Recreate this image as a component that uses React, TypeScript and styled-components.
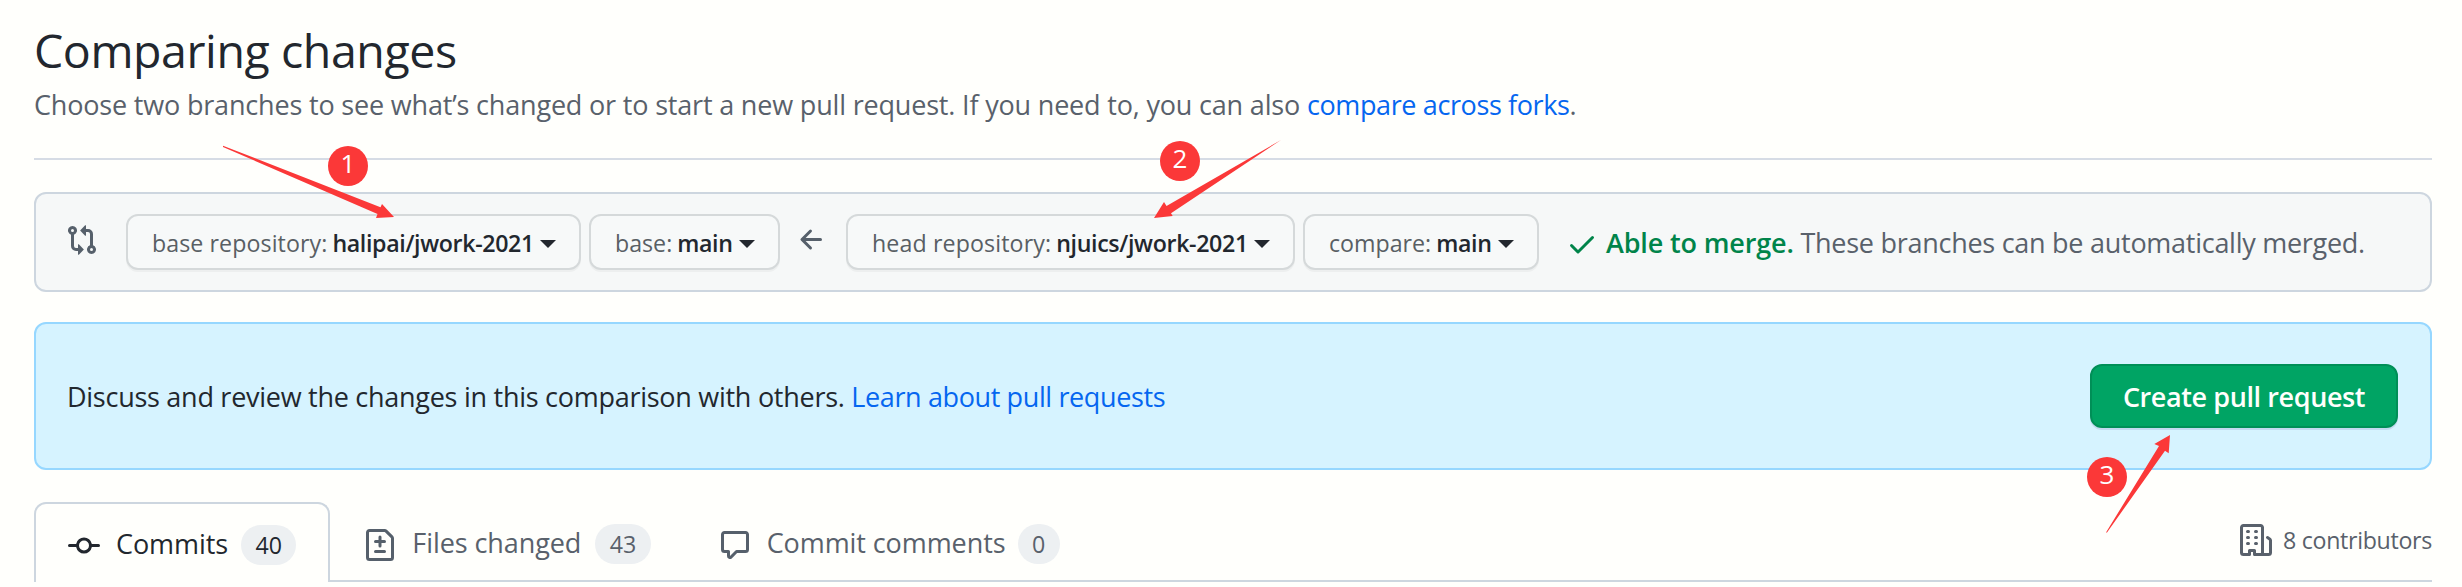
import React from 'react';
import styled, { createGlobalStyle } from 'styled-components';

const color = {
  page: '#fffffc',
  text: '#22272e',
  muted: '#59616b',
  icon: '#56606b',
  link: '#0566f0',
  line: '#cdd6df',
  success: '#00844a',
  mark: '#fb3838',
};

const GlobalStyle = createGlobalStyle`
  * { box-sizing: border-box; }
  body {
    margin: 0;
    background: ${color.page};
    color: ${color.text};
    font-family: 'Open Sans', 'Noto Sans', sans-serif;
    font-size: 27px;
    letter-spacing: -0.27px;
  }
`;

const Page = styled.main`
  position: relative;
  width: 2462px;
  height: 587px;
  padding: 14px 30px 0 34px;
  overflow: hidden;
`;

const Header = styled.header`
  height: 146px;
  border-bottom: 2px solid #d6dce5;
`;

const Title = styled.h1`
  margin: 0;
  font-size: 46.5px;
  font-weight: 400;
  line-height: 72px;
  letter-spacing: -0.42px;
`;

const Subtitle = styled.p`
  margin: 0;
  color: ${color.muted};
  line-height: 38px;
  letter-spacing: -0.18px;
`;

const Link = styled.a`
  color: ${color.link};
  letter-spacing: -0.38px;
  text-decoration: none;
`;

const RangeEditor = styled.section`
  display: flex;
  align-items: center;
  height: 100px;
  margin-top: 32px;
  padding-left: 30px;
  background: #f6f8f8;
  border: 2px solid ${color.line};
  border-radius: 12px;
`;

const Svg = styled.svg`
  display: block;
  flex: none;
  width: 32px;
  height: 32px;
  fill: currentColor;
`;

const CompareIcon = styled(Svg)`
  margin: 0 28px 4px 0;
  color: ${color.icon};
`;

const ArrowIcon = styled(Svg)`
  margin: 0 18px 4px 16px;
  color: ${color.icon};
`;

const CheckIcon = styled(Svg)`
  margin: 4px 8px 0 27px;
  color: ${color.success};
`;

const Selector = styled.button<{ $width: number }>`
  display: flex;
  flex: none;
  align-items: center;
  width: ${(p) => p.$width}px;
  height: 56px;
  padding: 2px 0 0 24px;
  background: #f7f9f9;
  border: 2px solid #d5d9da;
  border-radius: 12px;
  box-shadow: 0 2px 0 rgba(27, 31, 36, 0.04);
  color: #595f64;
  font-family: inherit;
  font-size: 23.2px;
  line-height: 40px;
  white-space: nowrap;

  & + & {
    margin-left: 8px;
  }
`;

const SelectorLabel = styled.span<{ $spacing: number }>`
  margin-right: 5px;
  letter-spacing: ${(p) => p.$spacing}px;
`;

const SelectorValue = styled.span`
  color: ${color.text};
  font-weight: 600;
  letter-spacing: -0.35px;
`;

const Caret = styled.span`
  margin: 2px 0 0 6px;
  border: 8px solid transparent;
  border-top-color: ${color.text};
  border-bottom: 0;
`;

const MergeStatus = styled.p`
  margin: 0;
  color: ${color.muted};
  white-space: nowrap;
`;

const MergeResult = styled.strong`
  color: ${color.success};
  font-weight: 600;
  letter-spacing: -0.15px;
`;

const Notice = styled.section`
  display: flex;
  align-items: center;
  justify-content: space-between;
  height: 148px;
  margin-top: 30px;
  padding: 0 32px 0 31px;
  background: #d6f3ff;
  border: 2px solid #96d7ff;
  border-radius: 12px;
`;

const NoticeText = styled.p`
  margin: 0;
`;

const CreateButton = styled.button`
  width: 308px;
  height: 64px;
  padding: 0;
  background: #00a464;
  border: 2px solid #008f57;
  border-radius: 12px;
  box-shadow: 0 2px 0 #c3daf0;
  color: #fffffc;
  font: 600 27px 'Open Sans', 'Noto Sans', sans-serif;
  letter-spacing: -0.4px;
`;

const TabBar = styled.nav`
  display: flex;
  height: 80px;
  margin-top: 32px;
`;

const Tab = styled.a<{ $active?: boolean }>`
  display: flex;
  align-items: center;
  height: 80px;
  padding: ${(p) => (p.$active ? '4px 32px 0' : '6px 34px 0')};
  border: solid ${color.line};
  border-width: ${(p) => (p.$active ? '2px 2px 0' : '0 0 2px')};
  border-radius: ${(p) => (p.$active ? '12px 12px 0 0' : '0')};
  color: ${(p) => (p.$active ? color.text : color.muted)};
  letter-spacing: -0.08px;
  white-space: nowrap;

  ${Svg} {
    margin-top: 2px;
    color: ${(p) => (p.$active ? color.text : color.icon)};
  }
`;

const TabLabel = styled.span<{ $width: number }>`
  width: ${(p) => p.$width}px;
  margin: -3px 0 0 16px;
`;

const Counter = styled.span`
  min-width: 41px;
  height: 40px;
  padding: 0 14.4px;
  background: #edf0f2;
  border-radius: 20px;
  font-size: 23.2px;
  font-weight: 500;
  letter-spacing: 0;
  line-height: 40px;
  text-align: center;
`;

const Contributors = styled.div`
  display: flex;
  flex: 1;
  align-items: center;
  justify-content: flex-end;
  gap: 11px;
  padding-bottom: 2px;
  border-bottom: 2px solid ${color.line};
  color: ${color.muted};
  font-size: 23.2px;
  letter-spacing: -0.31px;
`;

const Annotations = styled.svg`
  position: absolute;
  top: 0;
  left: 0;
  width: 2462px;
  height: 587px;
  fill: ${color.mark};
  pointer-events: none;
`;

const Step = styled.span<{ $x: number; $y: number }>`
  position: absolute;
  left: ${(p) => p.$x - 20}px;
  top: ${(p) => p.$y - 20}px;
  width: 40px;
  height: 40px;
  border-radius: 50%;
  background: ${color.mark};
  color: #fff;
  font-size: 26px;
  letter-spacing: 0;
  line-height: 34px;
  text-align: center;
`;

const paths = {
  compare:
    'M9.573.677L7.177 3.073a.25.25 0 000 .354l2.396 2.396A.25.25 0 0010 5.646V4h1a1 1 0 011 1v5.628a2.251 2.251 0 101.5 0V5A2.5 2.5 0 0011 2.5h-1V.854a.25.25 0 00-.427-.177zM6 12v-1.646a.25.25 0 01.427-.177l2.396 2.396a.25.25 0 010 .354l-2.396 2.396A.25.25 0 016 15.146V13.5H5A2.5 2.5 0 012.5 11V5.372a2.25 2.25 0 111.5 0V11a1 1 0 001 1h1zm6.75 0a.75.75 0 100 1.5.75.75 0 000-1.5zM4 3.25a.75.75 0 11-1.5 0 .75.75 0 011.5 0z',
  arrow:
    'M7.78 12.53a.75.75 0 01-1.06 0L2.47 8.28a.75.75 0 010-1.06l4.25-4.25a.75.75 0 011.06 1.06L4.81 7h7.44a.75.75 0 010 1.5H4.81l2.97 2.97a.75.75 0 010 1.06z',
  check:
    'M13.78 4.22a.75.75 0 010 1.06l-7.25 7.25a.75.75 0 01-1.06 0L2.22 9.28a.75.75 0 011.06-1.06L6 10.94l6.72-6.72a.75.75 0 011.06 0z',
  commit:
    'M10.5 7.75a2.5 2.5 0 11-5 0 2.5 2.5 0 015 0zm1.43.75a4.002 4.002 0 01-7.86 0H.75a.75.75 0 110-1.5h3.32a4.001 4.001 0 017.86 0h3.32a.75.75 0 110 1.5h-3.32z',
  fileDiff:
    'M2.75 1.5a.25.25 0 00-.25.25v12.5c0 .138.112.25.25.25h10.5a.25.25 0 00.25-.25V4.664a.25.25 0 00-.073-.177l-2.914-2.914a.25.25 0 00-.177-.073H2.75zM1 1.75C1 .784 1.784 0 2.75 0h7.586c.464 0 .909.184 1.237.513l2.914 2.914c.329.328.513.773.513 1.237v9.586A1.75 1.75 0 0113.25 16H2.75A1.75 1.75 0 011 14.25V1.75zm7 1.5a.75.75 0 01.75.75v1.5h1.5a.75.75 0 010 1.5h-1.5v1.5a.75.75 0 01-1.5 0V7h-1.5a.75.75 0 010-1.5h1.5V4A.75.75 0 018 3.25zm-3 8a.75.75 0 01.75-.75h4.5a.75.75 0 010 1.5h-4.5a.75.75 0 01-.75-.75z',
  comment:
    'M2.75 2.5a.25.25 0 00-.25.25v7.5c0 .138.112.25.25.25h2a.75.75 0 01.75.75v2.19l2.72-2.72a.75.75 0 01.53-.22h4.5a.25.25 0 00.25-.25v-7.5a.25.25 0 00-.25-.25H2.75zM1 2.75C1 1.784 1.784 1 2.75 1h10.5c.966 0 1.75.784 1.75 1.75v7.5A1.75 1.75 0 0113.25 12H9.06l-2.573 2.573A1.457 1.457 0 014 13.543V12H2.75A1.75 1.75 0 011 10.25v-7.5z',
  organization:
    'M1.5 14.25c0 .138.112.25.25.25H4v-1.25a.75.75 0 01.75-.75h2.5a.75.75 0 01.75.75v1.25h2.25a.25.25 0 00.25-.25V1.75a.25.25 0 00-.25-.25h-8.5a.25.25 0 00-.25.25v12.5zM1.75 16A1.75 1.75 0 010 14.25V1.75C0 .784.784 0 1.75 0h8.5C11.216 0 12 .784 12 1.75v12.5c0 .085-.006.168-.018.25h2.268a.25.25 0 00.25-.25V8.285a.25.25 0 00-.111-.208l-1.055-.703a.75.75 0 11.832-1.248l1.055.703c.487.325.779.871.779 1.456v5.965A1.75 1.75 0 0114.25 16h-3.5a.75.75 0 01-.197-.026c-.099.017-.2.026-.303.026h-3a.75.75 0 01-.75-.75V14h-1v1.25a.75.75 0 01-.75.75h-3zM3 3.75A.75.75 0 013.75 3h.5a.75.75 0 010 1.5h-.5A.75.75 0 013 3.75zM3.75 6a.75.75 0 000 1.5h.5a.75.75 0 000-1.5h-.5zM3 9.75A.75.75 0 013.75 9h.5a.75.75 0 010 1.5h-.5A.75.75 0 013 9.75zM7.75 9a.75.75 0 000 1.5h.5a.75.75 0 000-1.5h-.5zM7 6.75A.75.75 0 017.75 6h.5a.75.75 0 010 1.5h-.5A.75.75 0 017 6.75zM7.75 3a.75.75 0 000 1.5h.5a.75.75 0 000-1.5h-.5z',
};

type BranchSelectProps = { label: string; value: string; width: number; spacing?: number };

function BranchSelect({ label, value, width, spacing = 0 }: BranchSelectProps) {
  return (
    <Selector $width={width}>
      <SelectorLabel $spacing={spacing}>{label}</SelectorLabel>
      <SelectorValue>{value}</SelectorValue>
      <Caret />
    </Selector>
  );
}

const tabs = [
  { icon: paths.commit, label: 'Commits', width: 125, count: 40, active: true },
  { icon: paths.fileDiff, label: 'Files changed', width: 183, count: 43 },
  { icon: paths.comment, label: 'Commit comments', width: 251, count: 0 },
];

export default function App() {
  return (
    <Page>
      <GlobalStyle />
      <Header>
        <Title>Comparing changes</Title>
        <Subtitle>
          Choose two branches to see what’s changed or to start a new pull request. If you need to, you can also{' '}
          <Link>compare across forks</Link>.
        </Subtitle>
      </Header>

      <RangeEditor>
        <CompareIcon viewBox="0 0 16 16"><path fillRule="evenodd" d={paths.compare} /></CompareIcon>
        <BranchSelect label="base repository:" value="halipai/jwork-2021" width={455} spacing={0.08} />
        <BranchSelect label="base:" value="main" width={191} />
        <ArrowIcon viewBox="0 0 16 16"><path fillRule="evenodd" d={paths.arrow} /></ArrowIcon>
        <BranchSelect label="head repository:" value="njuics/jwork-2021" width={449} spacing={0.12} />
        <BranchSelect label="compare:" value="main" width={236} />
        <CheckIcon viewBox="0 0 16 16"><path fillRule="evenodd" d={paths.check} /></CheckIcon>
        <MergeStatus>
          <MergeResult>Able to merge.</MergeResult> These branches can be automatically merged.
        </MergeStatus>
      </RangeEditor>

      <Notice>
        <NoticeText>
          Discuss and review the changes in this comparison with others. <Link>Learn about pull requests</Link>
        </NoticeText>
        <CreateButton>Create pull request</CreateButton>
      </Notice>

      <TabBar>
        {tabs.map((tab) => (
          <Tab key={tab.label} $active={tab.active}>
            <Svg viewBox="0 0 16 16"><path fillRule="evenodd" d={tab.icon} /></Svg>
            <TabLabel $width={tab.width}>{tab.label}</TabLabel>
            <Counter>{tab.count}</Counter>
          </Tab>
        ))}
        <Contributors>
          <Svg viewBox="0 0 16 16"><path fillRule="evenodd" d={paths.organization} /></Svg>
          <span>8 contributors</span>
        </Contributors>
      </TabBar>

      <Annotations viewBox="0 0 2462 587">
        <polygon points="223,145.7 380.5,207.3 382,204 394,217 376,218 377.5,214 223,147" />
        <polygon points="1281,140 1166.5,206 1164,202 1154,218 1172.7,216 1171,213.3" />
        <polygon points="2106,532.5 2159,446 2154.3,444 2170,435 2168.7,453.3 2165,450.7 2107,532.5" />
      </Annotations>
      <Step $x={348} $y={166}>1</Step>
      <Step $x={1180} $y={161}>2</Step>
      <Step $x={2107} $y={477}>3</Step>
    </Page>
  );
}
